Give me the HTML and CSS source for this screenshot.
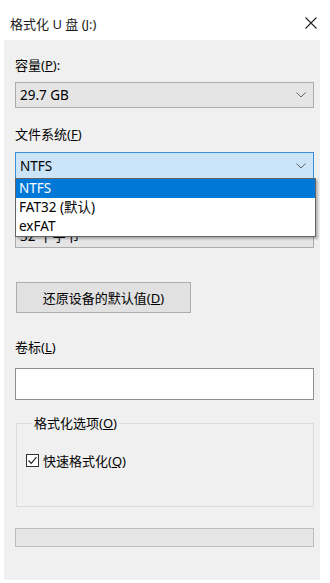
FILE: index.html
```html
<!DOCTYPE html>
<html lang="zh-CN">
<head>
  <meta charset="UTF-8" />
  <title>格式化 U 盘 (J:)</title>
  <link rel="stylesheet" href="styles.css">
</head>
<body>
  <div class="window">
    <div class="titlebar">
      <span class="title">格式化 U 盘 (J:)</span>
      <svg class="close" width="12" height="12" viewBox="0 0 12 12">
        <path d="M0.5 0.5 L11.5 11.5 M11.5 0.5 L0.5 11.5" stroke="#222" stroke-width="1.1" fill="none" />
      </svg>
    </div>

    <div class="content">
      <div class="label first">容量(<u>P</u>):</div>
      <div class="combo">
        <span>29.7 GB</span>
        <svg class="chev" width="10" height="6" viewBox="0 0 10 6"><polyline points="0.5,0.5 5,5 9.5,0.5" fill="none" stroke="#606060" stroke-width="1" /></svg>
      </div>

      <div class="label">文件系统(<u>F</u>)</div>
      <div class="fs-wrap">
        <div class="combo focus">
          <span>NTFS</span>
          <svg class="chev" width="10" height="6" viewBox="0 0 10 6"><polyline points="0.5,0.5 5,5 9.5,0.5" fill="none" stroke="#606060" stroke-width="1" /></svg>
        </div>
        <!-- 展开的下拉列表 -->
        <ul class="dropdown">
          <li class="sel">NTFS</li>
          <li>FAT32 (默认)</li>
          <li>exFAT</li>
        </ul>
      </div>

      <div class="label">分配单元大小(<u>A</u>)</div>
      <div class="combo">
        <span>32 千字节</span>
        <svg class="chev" width="10" height="6" viewBox="0 0 10 6"><polyline points="0.5,0.5 5,5 9.5,0.5" fill="none" stroke="#606060" stroke-width="1" /></svg>
      </div>

      <button class="restore">还原设备的默认值(<u>D</u>)</button>

      <div class="label vol">卷标(<u>L</u>)</div>
      <input class="volume" type="text" value="" />

      <fieldset class="options">
        <legend>格式化选项(<u>O</u>)</legend>
        <label class="check">
          <svg width="13" height="13" viewBox="0 0 13 13">
            <rect x="0.5" y="0.5" width="12" height="12" fill="#fff" stroke="#333" />
            <polyline points="2.5,6.5 5.2,9.3 10.5,3.2" fill="none" stroke="#222" stroke-width="1.2" />
          </svg>
          <span>快速格式化(<u>Q</u>)</span>
        </label>
      </fieldset>

      <div class="progress"></div>
    </div>
  </div>
</body>
</html>
```

FILE: styles.css
```css
body {
  margin: 0;
  background: #fff;
  font-family: "Noto Sans", "Noto Sans CJK SC", sans-serif;
  font-size: 13px;
  color: #000;
}
.window { width: 330px; height: 583px; }
.titlebar {
  height: 40px;
  box-sizing: border-box;
  padding: 6px 13px 0 10px;
  display: flex;
  align-items: center;
  justify-content: space-between;
}
.title { font-size: 13px; color: #1a1a1a; }

.content {
  margin-left: 4px;
  width: 316px;
  height: 540px;
  box-sizing: border-box;
  background: #f0f0f0;
  padding: 16px 6px 0 11px;
}
.label { height: 18px; line-height: 18px; margin-top: 17px; }
.label.first { margin-top: 0; }
.label.vol { margin-top: 25px; }

.combo {
  margin-top: 8px;
  height: 26px;
  box-sizing: border-box;
  background: #e5e5e5;
  border: 1px solid #adadad;
  display: flex;
  align-items: center;
  justify-content: space-between;
  padding: 0 7px 0 4px;
  font-size: 13.5px;
}
.combo.focus {
  margin-top: 9px;
  height: 27px;
  background: #cce4f7;
  border-color: #3c8fd6;
}
.fs-wrap { position: relative; }

.dropdown {
  position: absolute;
  left: 0;
  top: 26px;
  width: 299px;
  margin: 0;
  padding: 0;
  list-style: none;
  background: #fff;
  border: 1px solid #646464;
  box-shadow: 2px 2px 2px rgba(0, 0, 0, 0.25);
  z-index: 2;
}
.dropdown li { height: 19px; line-height: 19px; padding-left: 3px; font-size: 13.5px; }
.dropdown li.sel { background: #0078d7; color: #fff; }

.restore {
  display: block;
  margin-top: 34px;
  margin-left: 1px;
  width: 175px;
  height: 31px;
  background: #e1e1e1;
  border: 1px solid #adadad;
  font-family: inherit;
  font-size: 13px;
  color: #000;
  padding: 0;
}

.volume {
  display: block;
  margin-top: 12px;
  width: 299px;
  height: 32px;
  box-sizing: border-box;
  border: 1px solid #8f8f8f;
  background: #fff;
  padding: 0 4px;
}

.options {
  margin: 14px 0 0 1px;
  width: 298px;
  height: 93px;
  box-sizing: border-box;
  border: 1px solid #dcdcdc;
  padding: 0 0 0 9px;
}
.options legend { padding: 0 2px; margin-left: 6px; line-height: 18px; }
.check { display: flex; align-items: center; gap: 4px; margin-top: 19px; }
.check svg { display: block; }

.progress {
  margin-top: 21px;
  width: 299px;
  height: 19px;
  box-sizing: border-box;
  background: #e6e6e6;
  border: 1px solid #bcbcbc;
}
```
